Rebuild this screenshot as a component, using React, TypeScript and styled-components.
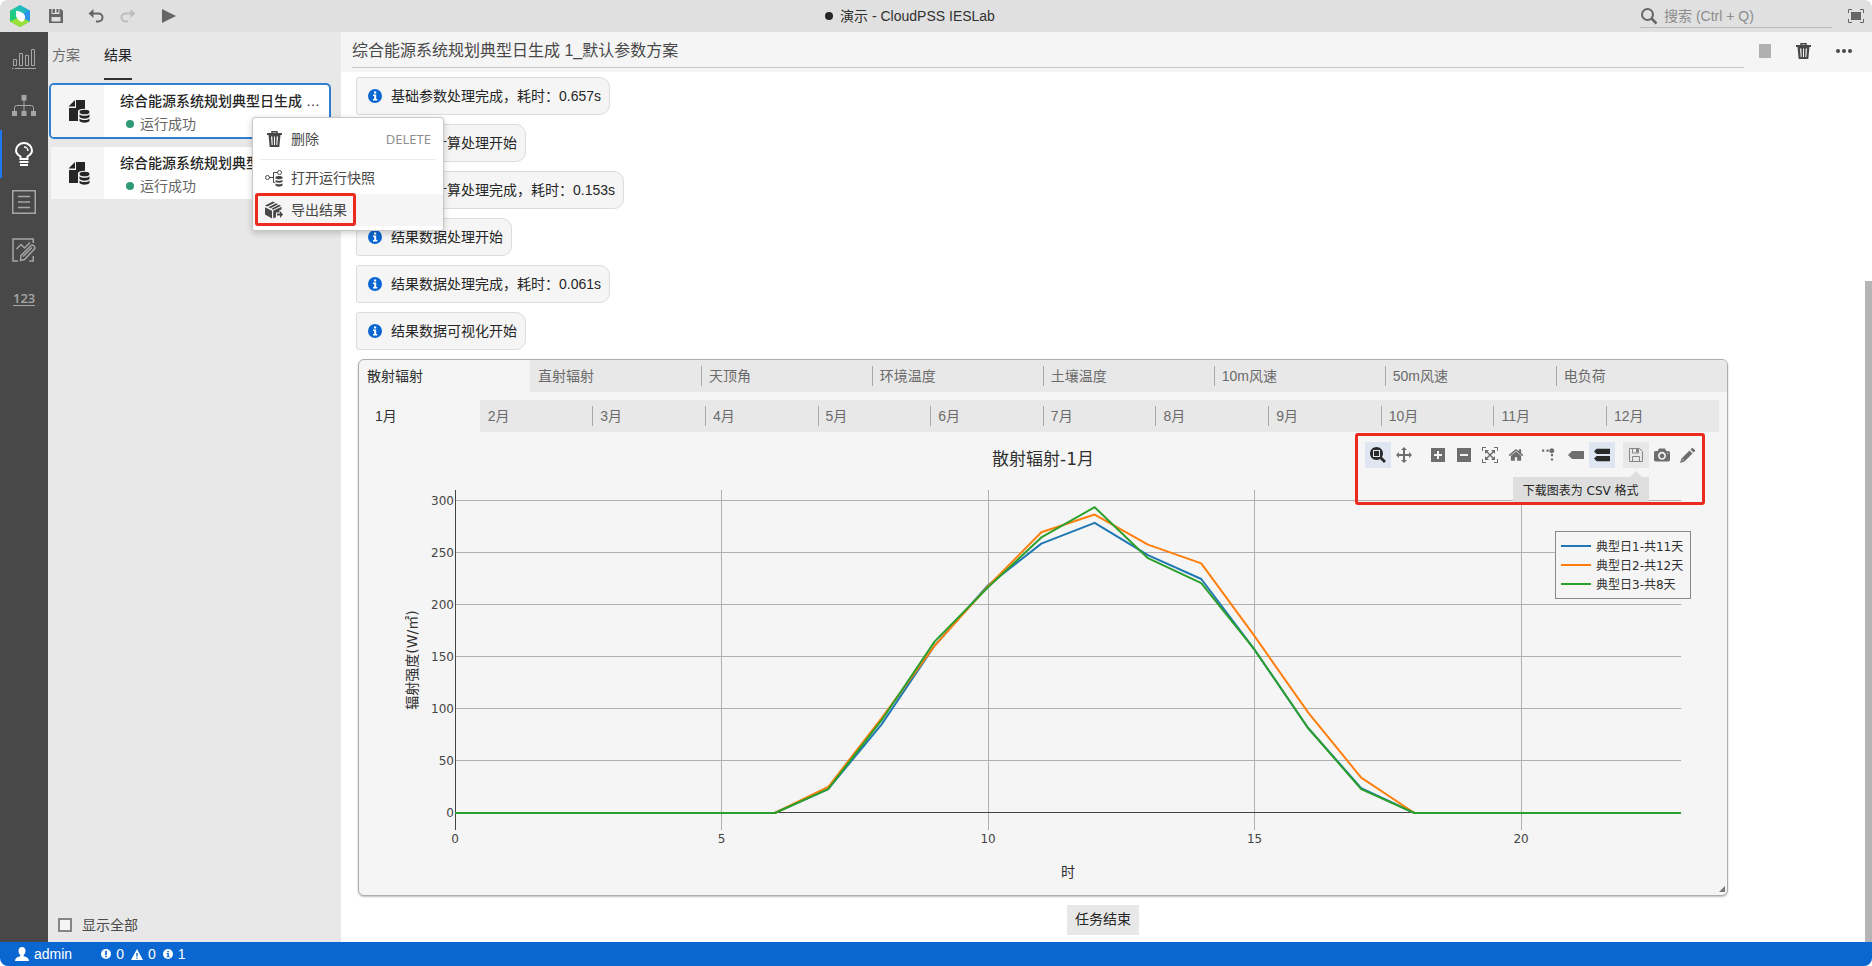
import React, { useEffect, useRef, useState } from "react";
import styled, { createGlobalStyle } from "styled-components";

const uiFont = `"Liberation Sans", "Noto Sans CJK SC", sans-serif`;
const plotFont = `"DejaVu Sans", "Noto Sans CJK SC", sans-serif`;

const GlobalStyle = createGlobalStyle`
  *, *::before, *::after { box-sizing: border-box; }
  body { margin: 0; background: #fff; font-family: ${uiFont}; font-size: 14px; line-height: 20px; color: #262626; }
  button, input { font: inherit; color: inherit; }
  button { border: 0; padding: 0; background: none; cursor: pointer; }
  svg { display: block; }
  h1, h2, p, ul, ol { margin: 0; padding: 0; font-size: inherit; font-weight: normal; list-style: none; }
`;

/* ---------- frame ---------- */

const Window = styled.div`
  position: relative;
  display: flex;
  flex-direction: column;
  min-height: 100vh;
  border-radius: 8px;
  overflow: hidden;
`;

const TitleBar = styled.header`
  display: flex;
  align-items: center;
  height: 32px;
  background: #e0e0e0;
  color: #666;
`;

const BarTools = styled.div`
  display: flex;
  align-items: center;
  width: 188px;
  padding-left: 9px;
`;

const BarButton = styled.button<{ $gap?: number }>`
  flex: none;
  display: flex;
  align-items: center;
  justify-content: center;
  width: 16px;
  height: 24px;
  margin-left: ${(p) => p.$gap ?? 16}px;
  &:disabled { color: #bdbdbd; }
`;

const WindowTitle = styled.h1`
  flex: 1;
  display: flex;
  align-items: center;
  justify-content: center;
  gap: 7px;
  color: #303030;
`;

const Dot = styled.span<{ $color: string }>`
  width: 8px;
  height: 8px;
  border-radius: 50%;
  background: ${(p) => p.$color};
`;

const SearchArea = styled.div`
  display: flex;
  align-items: center;
  width: 240px;
  padding: 0 8px;
`;

const SearchBox = styled.label`
  flex: 1;
  min-width: 0;
  display: flex;
  align-items: center;
  gap: 6px;
  height: 24px;
  border-bottom: 1px solid #bcbcbc;
`;

const SearchInput = styled.input`
  flex: 1;
  min-width: 0;
  padding: 0;
  border: 0;
  outline: 0;
  background: transparent;
  &::placeholder { color: #8c8c8c; opacity: 1; }
`;

const Workspace = styled.div`
  flex: 1;
  display: flex;
  background: #fff;
`;

const ActivityBar = styled.nav`
  flex: none;
  width: 48px;
  padding-top: 2px;
  background: #484848;
`;

const ActivityButton = styled.button<{ $active?: boolean }>`
  display: flex;
  align-items: center;
  justify-content: center;
  width: 48px;
  height: 48px;
  color: ${(p) => (p.$active ? "#fff" : "#a6a6a6")};
  box-shadow: ${(p) => (p.$active ? "inset 2px 0 #1f78f0" : "none")};
`;

/* ---------- result list ---------- */

const SidePanel = styled.aside`
  flex: none;
  display: flex;
  flex-direction: column;
  width: 293px;
  background: #e8e8e8;
`;

const SideTabs = styled.div`
  display: flex;
  gap: 24px;
  height: 48px;
  padding-left: 4px;
`;

const SideTab = styled.button<{ $active?: boolean }>`
  color: ${(p) => (p.$active ? "#222" : "#6b6b6b")};
  border-bottom: 2px solid ${(p) => (p.$active ? "#303030" : "transparent")};
`;

const ResultList = styled.ul`
  display: flex;
  flex-direction: column;
  gap: 6px;
  padding: 3px 10px 0 1px;
`;

const ResultCard = styled.li<{ $active?: boolean }>`
  display: flex;
  height: 56px;
  border: 2px solid ${(p) => (p.$active ? "#2e7fd0" : "transparent")};
  border-radius: 5px;
  background: #fff;
  background-clip: padding-box;
  overflow: hidden;
`;

const ResultIcon = styled.div`
  flex: none;
  display: flex;
  align-items: center;
  justify-content: center;
  width: 53px;
  padding-left: 2px;
  background: #f5f5f5;
  color: #262626;
`;

const ResultText = styled.div`
  flex: 1;
  min-width: 0;
  padding: 6px 8px 0 16px;
`;

const ResultName = styled.p`
  font-weight: 500;
  line-height: 20px;
  overflow: hidden;
  text-overflow: ellipsis;
  white-space: nowrap;
`;

const ResultState = styled.p`
  display: flex;
  align-items: center;
  gap: 6px;
  margin-top: 3px;
  padding-left: 6px;
  color: #666;
`;

const ShowAll = styled.label`
  display: flex;
  align-items: center;
  gap: 10px;
  height: 34px;
  margin-top: auto;
  padding-left: 10px;
  color: #4a4a4a;
`;

const CheckBox = styled.input`
  appearance: none;
  width: 14px;
  height: 14px;
  margin: 0;
  border: 2px solid #858585;
  background: #f5f5f5;
  &:checked { background: #0a66d0; }
`;

/* ---------- context menu ---------- */

const ContextMenu = styled.div`
  position: absolute;
  left: 252px;
  top: 117px;
  z-index: 2;
  width: 192px;
  padding: 5px 0 4px;
  border: 1px solid #c8c8c8;
  border-radius: 3px;
  background: #fff;
  box-shadow: 0 2px 6px rgba(0, 0, 0, 0.2);
`;

const MenuItem = styled.button<{ $hover?: boolean }>`
  display: flex;
  align-items: center;
  gap: 8px;
  width: 100%;
  height: 32px;
  padding: 0 12px;
  color: #484848;
  background: ${(p) => (p.$hover ? "#f5f5f5" : "transparent")};
`;

const MenuIcon = styled.span`
  display: flex;
  justify-content: center;
  width: 18px;
`;

const Shortcut = styled.kbd`
  margin-left: auto;
  font: 13px "Noto Sans", sans-serif;
  color: #8f8f8f;
`;

const MenuDivider = styled.hr`
  height: 1px;
  margin: 4px 7px 2px;
  border: 0;
  background: #ebebeb;
`;

const MenuItemWrap = styled.div`
  position: relative;
`;

const Highlight = styled.div<{ $inset: string }>`
  position: absolute;
  inset: ${(p) => p.$inset};
  border: 3px solid #ec2a20;
  border-radius: 3px;
  pointer-events: none;
`;

/* ---------- main ---------- */

const Main = styled.main`
  flex: 1;
  min-width: 0;
  display: flex;
  flex-direction: column;
`;

const MainHeader = styled.div`
  display: flex;
  height: 40px;
  padding: 0 20px 4px 11px;
  background: #f5f5f5;
  color: #484848;
`;

const DocTitle = styled.h2`
  flex: 1;
  font-size: 16px;
  line-height: 38px;
  border-bottom: 1px solid #c8c8c8;
  height: 36px;
`;

const HeaderTools = styled.div`
  display: flex;
  align-items: center;
  justify-content: space-between;
  width: 93px;
  height: 38px;
  margin-left: 15px;
`;

const HeaderButton = styled.button`
  display: flex;
  align-items: center;
  &:disabled { color: #b0b0b0; }
`;

const ScrollArea = styled.div`
  flex: 1;
  display: flex;
`;

const Output = styled.section`
  flex: 1;
  min-width: 0;
  display: flex;
  flex-direction: column;
  align-items: flex-start;
  gap: 9px;
  padding: 5px 0 7px;
`;

const ScrollTrack = styled.div`
  flex: none;
  display: flex;
  align-items: flex-end;
  width: 7px;
`;

const ScrollThumb = styled.div`
  width: 100%;
  height: 76%;
  background: #b5b5b5;
`;

const LogChip = styled.p`
  display: flex;
  align-items: center;
  gap: 9px;
  height: 38px;
  margin-left: 15px;
  padding: 0 8px 0 11px;
  border: 1px solid #dcdcdc;
  border-radius: 3px 10px 10px 3px;
  background: #f5f5f5;
`;

const ChartCard = styled.div`
  position: relative;
  width: calc(90% - 2px);
  margin-left: 17px;
  border: 1px solid #adadad;
  border-radius: 6px;
  background: #f5f5f5;
  box-shadow: 0 1px 2px rgba(0, 0, 0, 0.25);
  overflow: hidden;
`;

const TabStrip = styled.div<{ $inner?: boolean }>`
  display: flex;
  margin: ${(p) => (p.$inner ? "8px 8px 0" : "0")};
`;

const StripTab = styled.button<{ $active?: boolean; $line?: boolean }>`
  position: relative;
  flex: 1 1 0;
  height: 32px;
  padding-left: 8px;
  text-align: left;
  color: ${(p) => (p.$active ? "#303030" : "#6b6b6b")};
  background: ${(p) => (p.$active ? "transparent" : "#e8e8e8")};
  &::before {
    content: "";
    position: absolute;
    left: 0;
    top: 6px;
    height: 20px;
    border-left: 1px solid ${(p) => (p.$line ? "#a8a8a8" : "transparent")};
  }
`;

const Plot = styled.div`
  position: relative;
  height: 463px;
  margin: 0 8px;
`;

const Grip = styled.svg`
  position: absolute;
  right: 2px;
  bottom: 3px;
`;

const ModeBar = styled.div`
  position: absolute;
  top: 10px;
  right: 18px;
  display: flex;
  gap: 8px;
`;

const ModeGroup = styled.div`
  display: flex;
`;

const ModeButton = styled.button<{ $state?: "on" | "hover" }>`
  display: flex;
  align-items: center;
  justify-content: center;
  width: 26px;
  height: 26px;
  color: ${(p) => (p.$state === "on" ? "#2a2a2a" : "#6e6e6e")};
  background: ${(p) => (p.$state === "on" ? "#dfe6f1" : p.$state === "hover" ? "#e8e8e8" : "transparent")};
`;

const Tip = styled.div`
  position: absolute;
  top: 35px;
  right: 52px;
  padding: 0 10px;
  height: 26px;
  background: #dedede;
  font-family: ${plotFont};
  font-size: 12px;
  line-height: 28px;
  white-space: nowrap;
  &::before {
    content: "";
    position: absolute;
    right: 7px;
    top: -6px;
    border: 6px solid transparent;
    border-top: 0;
    border-bottom-color: #dedede;
  }
`;

const EndNote = styled.p`
  align-self: center;
  height: 30px;
  padding: 0 8px;
  line-height: 28px;
  background: #e8e8e8;
`;

const StatusBar = styled.footer`
  display: flex;
  align-items: center;
  height: 24px;
  padding-left: 15px;
  background: #0a66d0;
  color: #fff;
`;

const StatusItem = styled.button<{ $before?: number }>`
  display: flex;
  align-items: center;
  gap: 5px;
  margin-left: ${(p) => p.$before ?? 7}px;
`;

/* ---------- icons ---------- */

const Logo = () => (
  <svg width="22" height="22" viewBox="0 0 22 22">
    <defs>
      <linearGradient id="lg" x1="0" y1="1" x2="1" y2="0">
        <stop offset="0" stopColor="#1fd04a" />
        <stop offset="0.55" stopColor="#22c9a0" />
        <stop offset="1" stopColor="#1f9bf5" />
      </linearGradient>
    </defs>
    <path d="M11 0 21 5.5v11L11 22 1 16.500v-11z" fill="url(#lg)" />
    <path d="M1 16.500 11 12l10 4.500L11 22z" fill="#9be03a" />
    <path d="M21 5.500v11l-6-3V8z" fill="#2a94f0" />
    <path d="M7 6c4 0 8 2 9 5 .5 2-1 5-3 6-3-1-6-4-6-7z" fill="#fff" />
  </svg>
);

const Save = () => (
  <svg width="14" height="14" viewBox="0 0 14 14">
    <path fill="currentColor" fillRule="evenodd" d="M0 0h2.500v5h8V0H12l2 2v12H0zM2.500 8v4.500h9V8zM7.500 0H9.500v3.500H7.500zM3.500 0H6v4H3.500z" />
  </svg>
);

const Undo = ({ flip }: { flip?: boolean }) => (
  <svg width="16" height="14" viewBox="0 0 16 14" fill="none" stroke="currentColor" strokeWidth="2">
    <g transform={flip ? "matrix(-1 0 0 1 16 0)" : undefined}>
      <path d="M2 4.500h8.500a4 4 0 0 1 0 8H8" />
      <path d="M5.500 0 0.500 4.500l5 4.500z" fill="currentColor" stroke="none" />
    </g>
  </svg>
);

const Play = () => (
  <svg width="14" height="14" viewBox="0 0 14 14"><path d="M0 0l14 7-14 7z" fill="currentColor" /></svg>
);

const Search = () => (
  <svg width="18" height="18" viewBox="0 0 18 18" fill="none" stroke="#666">
    <circle cx="7.500" cy="7.500" r="5.500" strokeWidth="2" />
    <path d="M11.500 11.500 16.500 16.500" strokeWidth="2.500" />
  </svg>
);

const FullScreen = () => (
  <svg width="16" height="14" viewBox="0 0 16 14" fill="none" stroke="currentColor">
    <path d="M.5 4V.5H4M12 .5h3.500V4M15.500 10v3.500H12M4 13.500H.5V10" />
    <path d="M3 3h10v8H3z" fill="currentColor" stroke="none" />
  </svg>
);

const Trash = () => (
  <svg width="15" height="16" viewBox="0 0 15 16">
    <path fill="none" stroke="currentColor" strokeWidth="1.500" d="M5 2.500V.75h5V2.500" />
    <path fill="currentColor" d="M0 2h15v2H0z" />
    <path fill="currentColor" fillRule="evenodd" d="M1.500 4h12l-1.200 12H2.700zM4 5.500l.7 8.500h1L5.300 5.500zM7 5.500V14h1V5.500zM9.700 5.500 9.300 14h1l.7-8.500z" />
  </svg>
);

const Dots = () => (
  <svg width="16" height="4" viewBox="0 0 16 4" fill="currentColor">
    <circle cx="2" cy="2" r="2" /><circle cx="8" cy="2" r="2" /><circle cx="14" cy="2" r="2" />
  </svg>
);

const Square = () => (
  <svg width="12" height="14" viewBox="0 0 12 14"><path d="M0 0h12v14H0z" fill="currentColor" /></svg>
);

const Bars = () => (
  <svg width="24" height="22" viewBox="0 0 24 22" fill="none" stroke="currentColor">
    <path d="M1.500 12.500h3v6h-3zM7.500 6.500h3v12h-3zM13.500 8.500h3v10h-3zM19.500 2.500h3v16h-3zM0 21.500h1.500M3 21.500h21" />
  </svg>
);

const Tree = () => (
  <svg width="24" height="22" viewBox="0 0 24 22" fill="currentColor">
    <path d="M9.500 0h5v5.500h-5zM0 16h5v5H0zM9.500 16h5v5h-5zM19 16h5v5h-5z" />
    <path fill="none" stroke="currentColor" d="M12 5v11M2.500 16v-3.500q0-2 2-2h15q2 0 2 2V16" />
  </svg>
);

const Bulb = () => (
  <svg width="20" height="24" viewBox="0 0 20 24" fill="none" stroke="currentColor" strokeWidth="2">
    <path d="M6.500 17v-2.500C4 13 2 11.500 2 8.500a8 7.500 0 0 1 16 0c0 3-2 4.500-4.500 6V17zM5.500 20h9M6 23h8" />
    <path d="M10 5a4 4 0 0 1 4 4" strokeWidth="1.500" />
  </svg>
);

const ListIcon = () => (
  <svg width="24" height="24" viewBox="0 0 24 24" fill="none" stroke="currentColor" strokeWidth="1.500">
    <path d="M.75.75h22.500v22.500H.75z" />
    <path d="M6 6.500h12M6 12h12M6 17.500h12" />
  </svg>
);

const EditChart = () => (
  <svg width="24" height="24" viewBox="0 0 24 24" fill="none" stroke="currentColor" strokeWidth="1.500">
    <path d="M21.250 5V1H1v22h5M21.250 18v5h-4" />
    <path d="M4.500 11 9 6.500l3.500 3.500L18 4.500M8.500 22.500l.5-5L19 7.500q1.500-1 3 .5t.5 3L12.500 21.500zM11 18.500 20 9.500" />
  </svg>
);

const Digits = styled.span`
  width: 22px;
  font-family: "Open Sans", "Noto Sans", sans-serif;
  font-size: 13px;
  font-weight: 600;
  line-height: 14px;
  text-align: center;
  border-bottom: 1px solid currentColor;
`;

const DocDb = () => (
  <svg width="22" height="24" viewBox="0 0 22 24" fill="currentColor">
    <path d="M8 1h9v21H1V9h7z" />
    <path d="M0.500 7.500 7 1v6.500z" />
    <path d="M10 12c1-3 12-3 13 0v12H10z" fill="#f5f5f5" />
    <ellipse cx="16.500" cy="13" rx="5" ry="2.300" />
    <path d="M11.500 15.300c2 2 8 2 10 0V18c-2 2.200-8 2.200-10 0zM11.500 19.500c2 2 8 2 10 0V22c-2 2.300-8 2.300-10 0z" />
  </svg>
);

const Snapshot = () => (
  <svg width="18" height="17" viewBox="0 0 18 17" fill="none" stroke="currentColor">
    <circle cx="2.500" cy="7.500" r="2" /><circle cx="14.500" cy="2.500" r="2" />
    <path d="M4.500 7.500h4M12.500 2.500H8.500v10H10" />
    <path fill="currentColor" stroke="none" d="M10.500 7c1.500-1.200 5.500-1.200 7 0v1.500c-1.500 1-5.500 1-7 0zM10.500 10c1.500 1 5.500 1 7 0v2c-1.500 1-5.500 1-7 0zM10.500 13.500c1.500 1 5.500 1 7 0v2c-1.500 1.500-5.500 1.500-7 0z" />
  </svg>
);

const Package = () => (
  <svg width="18" height="18" viewBox="0 0 18 18" fill="currentColor">
    <path d="M0 4.500 8 .5l2 1-7.500 4zM3.500 6.200l7.500-4 2 1-7.500 4zM6.500 7.800 14 3.800l2 1-8 4zM0 6.200l7 3.500V17.500l-7-4z" />
    <path d="M8.200 9.800 16.500 5.800v3L14.500 8.800v2.700H11V16l-2.800 1.500z" />
    <path d="M12 12.500h3V10l3 3.500-3 3.500v-2.500h-3z" />
  </svg>
);

const Info = ({ size = 14, bg, fg }: { size?: number; bg: string; fg: string }) => (
  <svg width={size} height={size} viewBox="0 0 14 14">
    <circle cx="7" cy="7" r="7" fill={bg} />
    <path fill={fg} d="M6 2.500h2.200v2H6zM5 5.500h3.200V10H9.300v1.500H5V10h1.200V7H5z" />
  </svg>
);

const ErrorMark = () => (
  <svg width="10" height="10" viewBox="0 0 14 14">
    <circle cx="7" cy="7" r="7" fill="#fff" />
    <path fill="#0a66d0" d="M5.800 2.500h2.400v6H5.800zM5.800 9.500h2.400v2H5.800z" />
  </svg>
);

const WarnMark = () => (
  <svg width="12" height="11" viewBox="0 0 12 11">
    <path fill="#fff" d="M6 0l6 11H0z" />
    <path fill="#0a66d0" d="M5.300 4h1.400v3.500H5.300zM5.300 8.500h1.400v1.200H5.300z" />
  </svg>
);

const User = () => (
  <svg width="14" height="14" viewBox="0 0 14 14" fill="#fff">
    <path d="M7 0c2.200 0 3.500 1.500 3.500 4 0 1.800-.8 3.200-1.800 4v1.200c2 .8 5 1 5.300 4.800H0c.3-3.800 3.300-4 5.300-4.800V8c-1-.8-1.800-2.200-1.800-4 0-2.500 1.300-4 3.500-4z" />
  </svg>
);

/* Modebar glyphs use a 1000-unit em with the y axis pointing up. */
const Glyph = ({ w = 1000, d, t = "matrix(1 0 0 -1 0 850)" }: { w?: number; d: string; t?: string }) => (
  <svg width="16" height="16" viewBox={`0 0 ${w} 1000`} fill="currentColor"><path d={d} transform={t} /></svg>
);

const FloppyOutline = () => (
  <svg width="14" height="14" viewBox="0 0 14 14" fill="none" stroke="#858585">
    <path d="M.5.5h10l3 3v10H.5zM3.500 1v4h6V1M3.500 13V8.500h7V13" />
    <path d="M7.500 1h1.500v3H7.500z" fill="#858585" />
  </svg>
);

const Pencil = () => (
  <svg width="15" height="15" viewBox="0 0 15 15" fill="currentColor">
    <path d="M10.500 1.500 12 0h.8L15 2.200V3l-1.500 1.500zM9.500 2.500l3 3-8 8L0 15l1.500-4.500zM3 11l-.8 1.700 1.700-.7z" />
  </svg>
);

type Mode = { label: string; icon: React.ReactNode; state?: "on" | "hover" };

const modeGroups: Mode[][] = [
  [
    { label: "缩放", state: "on", icon: <Glyph d="m1000-25l-250 251c40 63 63 138 63 218 0 224-182 406-407 406-224 0-406-182-406-406s183-406 407-406c80 0 155 22 218 62l250-250 125 125z m-812 250l0 438 437 0 0-438-437 0z m62 375l313 0 0-312-313 0 0 312z" /> },
    { label: "平移", icon: <Glyph d="m1000 350l-187 188 0-125-250 0 0 250 125 0-188 187-187-187 125 0 0-250-250 0 0 125-188-188 186-187 0 125 252 0 0-250-125 0 187-188 188 188-125 0 0 250 250 0 0-126 187 188z" /> },
  ],
  [
    { label: "放大", icon: <Glyph w={875} d="m1 787l0-875 875 0 0 875-875 0z m687-500l-187 0 0-187-125 0 0 187-188 0 0 125 188 0 0 187 125 0 0-187 187 0 0-125z" /> },
    { label: "缩小", icon: <Glyph w={875} d="m0 788l0-876 875 0 0 876-875 0z m688-500l-500 0 0 125 500 0 0-125z" /> },
    { label: "自动缩放", icon: <Glyph d="m250 850l-187 0-63 0 0-62 0-188 63 0 0 188 187 0 0 62z m688 0l-188 0 0-62 188 0 0-188 62 0 0 188 0 62-62 0z m-875-938l0 188-63 0 0-188 0-62 63 0 187 0 0 62-187 0z m875 188l0-188-188 0 0-62 188 0 62 0 0 62 0 188-62 0z m-125 188l-1 0-93-94-156 156 156 156 92-93 2 0 0 250-250 0 0-2 93-92-156-156-156 156 94 92 0 2-250 0 0-250 0 0 93 93 157-156-157-156-93 94 0 0 0-250 250 0 0 0-94 93 156 157 156-157-93-93 0 0 250 0 0 250z" /> },
    { label: "重置坐标轴", icon: <Glyph w={929} d="M786 296v-267q0-15-11-26t-25-10h-214v214h-143v-214h-214q-15 0-25 10t-11 26v267q0 1 0 2t0 2l321 264 321-264q1-1 1-4z m124 39l-34-41q-5-5-12-6h-2q-7 0-12 3l-386 322-386-322q-7-4-13-4-7 2-12 7l-35 41q-4 5-3 13t6 12l401 334q18 15 42 15t43-15l136-114v109q0 8 5 13t13 5h107q8 0 13-5t5-13v-227l122-102q5-5 6-12t-4-13z" /> },
  ],
  [
    { label: "切换尖峰线", icon: <Glyph t="matrix(1.5 0 0 -1.5 0 850)" d="M512 409c0-57-46-104-103-104-57 0-104 47-104 104 0 57 47 103 104 103 57 0 103-46 103-103z m-327-39l92 0 0 92-92 0z m-185 0l92 0 0 92-92 0z m370-186l92 0 0 93-92 0z m0-184l92 0 0 92-92 0z" /> },
    { label: "显示最近数据", icon: <Glyph w={1500} d="m375 725l0 0-375-375 375-374 0-1 1125 0 0 750-1125 0z" /> },
    { label: "对比数据", state: "on", icon: <Glyph w={1125} d="m187 786l0 2-187-188 188-187 0 0 937 0 0 373-938 0z m0-499l0 1-187-188 188-188 0 0 937 0 0 376-938-1z" /> },
  ],
  [
    { label: "下载图表为 CSV 格式", state: "hover", icon: <FloppyOutline /> },
    { label: "下载图片", icon: <Glyph d="m500 450c-83 0-150-67-150-150 0-83 67-150 150-150 83 0 150 67 150 150 0 83-67 150-150 150z m400 150h-120c-16 0-34 13-39 29l-31 93c-6 15-23 28-40 28h-340c-16 0-34-13-39-28l-31-94c-6-15-23-28-40-28h-120c-55 0-100-45-100-100v-450c0-55 45-100 100-100h800c55 0 100 45 100 100v450c0 55-45 100-100 100z m-400-550c-138 0-250 112-250 250 0 138 112 250 250 250 138 0 250-112 250-250 0-138-112-250-250-250z m365 380c-19 0-35 16-35 35 0 19 16 35 35 35 19 0 35-16 35-35 0-19-16-35-35-35z" /> },
    { label: "编辑图表", icon: <Pencil /> },
  ],
];

/* ---------- data ---------- */

const quantities = ["散射辐射", "直射辐射", "天顶角", "环境温度", "土壤温度", "10m风速", "50m风速", "电负荷"];
const months = Array.from({ length: 12 }, (_, i) => `${i + 1}月`);
const docName = "综合能源系统规划典型日生成 1_默认参数方案";

const logs = [
  "基础参数处理完成，耗时：0.657s",
  "典型日计算处理开始",
  "典型日计算处理完成，耗时：0.153s",
  "结果数据处理开始",
  "结果数据处理完成，耗时：0.061s",
  "结果数据可视化开始",
];

const series = [
  { name: "典型日1-共11天", color: "#1f77b4", day: [23, 85, 161, 219, 259, 279, 248, 225, 157, 82, 24] },
  { name: "典型日2-共12天", color: "#ff7f0e", day: [25, 91, 161, 218, 270, 287, 258, 240, 170, 97, 34] },
  { name: "典型日3-共8天", color: "#2ca02c", day: [23, 89, 165, 217, 265, 294, 245, 221, 157, 82, 23] },
].map((s) => ({ ...s, values: [0, 0, 0, 0, 0, 0, 0, ...s.day, 0, 0, 0, 0, 0, 0] }));

/* ---------- chart ---------- */

const pad = { left: 88, right: 38, top: 58, zero: 380, bottom: 398 };

const Chart = () => {
  const box = useRef<HTMLDivElement>(null);
  const [width, setWidth] = useState(1353);

  useEffect(() => {
    const el = box.current;
    if (!el) return;
    const measure = () => setWidth(el.clientWidth);
    measure();
    const observer = new ResizeObserver(measure);
    observer.observe(el);
    return () => observer.disconnect();
  }, []);

  const right = width - pad.right;
  const x = (hour: number) => pad.left + (hour * (right - pad.left)) / 23;
  const y = (value: number) => pad.zero - (value * 52) / 50;
  const middle = (pad.left + right) / 2;
  const legendX = width - 164;

  return (
    <Plot ref={box}>
      <svg width={width} height="463" fontFamily={plotFont} fontSize="12" fill="#444" role="img" aria-label="散射辐射-1月">
        <text x={middle - 25} y="33" fontSize="17" textAnchor="middle" fill="#303030">散射辐射-1月</text>
        <g stroke="#b0b0b0" shapeRendering="crispEdges">
          {[5, 10, 15, 20].map((h) => <line key={h} x1={x(h)} x2={x(h)} y1={pad.top} y2={pad.bottom} />)}
          {[50, 100, 150, 200, 250, 300].map((v) => <line key={v} x1={pad.left} x2={right} y1={y(v)} y2={y(v)} />)}
        </g>
        <g stroke="#444" shapeRendering="crispEdges">
          <line x1={pad.left} x2={pad.left} y1={pad.top} y2={pad.bottom} />
          <line x1={pad.left} x2={right} y1={pad.zero} y2={pad.zero} />
        </g>
        {series.map((s) => (
          <polyline key={s.name} fill="none" stroke={s.color} strokeWidth="2" strokeLinejoin="round"
            points={s.values.map((v, h) => `${x(h)},${y(v) + 1}`).join(" ")} />
        ))}
        {[0, 50, 100, 150, 200, 250, 300].map((v) => (
          <text key={v} x={pad.left - 1} y={y(v) + 5} textAnchor="end">{v}</text>
        ))}
        {[0, 5, 10, 15, 20].map((h) => (
          <text key={h} x={x(h)} y={pad.bottom + 13} textAnchor="middle">{h}</text>
        ))}
        <text x={middle} y="445" fontSize="14" textAnchor="middle" fill="#303030">时</text>
        <text transform="translate(50 228) rotate(-90)" fontSize="14" textAnchor="middle" fill="#303030">辐射强度(W/㎡)</text>
        <g transform={`translate(${legendX} 99)`}>
          <rect x="0.5" y="0.5" width="135" height="67" fill="#f5f5f5" stroke="#888" />
          {series.map((s, i) => (
            <g key={s.name}>
              <line x1="6" x2="36" y1={15 + i * 19} y2={15 + i * 19} stroke={s.color} strokeWidth="2" />
              <text x="41" y={20 + i * 19} fill="#303030">{s.name}</text>
            </g>
          ))}
        </g>
      </svg>
      <ModeBar>
        {modeGroups.map((group, i) => (
          <ModeGroup key={i}>
            {group.map((m) => (
              <ModeButton key={m.label} $state={m.state} aria-label={m.label}>{m.icon}</ModeButton>
            ))}
          </ModeGroup>
        ))}
        <Tip role="tooltip">下载图表为 CSV 格式</Tip>
        <Highlight $inset="-9px -4px -37px -10px" />
      </ModeBar>
    </Plot>
  );
};

/* ---------- page ---------- */

const activities = [
  { label: "数据", icon: <Bars /> },
  { label: "拓扑", icon: <Tree /> },
  { label: "优化", icon: <Bulb />, active: true },
  { label: "列表", icon: <ListIcon /> },
  { label: "编辑", icon: <EditChart /> },
  { label: "数值", icon: <Digits>123</Digits> },
];

export default function App() {
  return (
    <Window>
      <GlobalStyle />
      <TitleBar>
        <BarTools>
          <Logo />
          <BarButton $gap={17} aria-label="保存"><Save /></BarButton>
          <BarButton $gap={24} aria-label="撤销"><Undo /></BarButton>
          <BarButton disabled aria-label="重做"><Undo flip /></BarButton>
          <BarButton $gap={25} aria-label="运行"><Play /></BarButton>
        </BarTools>
        <WindowTitle><Dot $color="#262626" />演示 - CloudPSS IESLab</WindowTitle>
        <SearchArea>
          <SearchBox>
            <Search />
            <SearchInput type="search" aria-label="搜索" placeholder="搜索 (Ctrl + Q)" />
          </SearchBox>
          <BarButton aria-label="全屏"><FullScreen /></BarButton>
        </SearchArea>
      </TitleBar>

      <Workspace>
        <ActivityBar>
          {activities.map((a) => (
            <ActivityButton key={a.label} $active={a.active} aria-label={a.label}>{a.icon}</ActivityButton>
          ))}
        </ActivityBar>

        <SidePanel>
          <SideTabs>
            <SideTab>方案</SideTab>
            <SideTab $active>结果</SideTab>
          </SideTabs>
          <ResultList>
            {[true, false].map((active) => (
              <ResultCard key={String(active)} $active={active}>
                <ResultIcon><DocDb /></ResultIcon>
                <ResultText>
                  <ResultName>{docName}</ResultName>
                  <ResultState><Dot $color="#2e9b76" />运行成功</ResultState>
                </ResultText>
              </ResultCard>
            ))}
          </ResultList>
          <ShowAll><CheckBox type="checkbox" />显示全部</ShowAll>
        </SidePanel>

        <Main>
          <MainHeader>
            <DocTitle>{docName}</DocTitle>
            <HeaderTools>
              <HeaderButton disabled aria-label="停止"><Square /></HeaderButton>
              <HeaderButton aria-label="删除"><Trash /></HeaderButton>
              <HeaderButton aria-label="更多"><Dots /></HeaderButton>
            </HeaderTools>
          </MainHeader>
          <ScrollArea>
            <Output>
              {logs.map((line) => (
                <LogChip key={line}><Info bg="#0a66d0" fg="#fff" />{line}</LogChip>
              ))}
              <ChartCard>
                <TabStrip>
                  {quantities.map((q, i) => (
                    <StripTab key={q} $active={i === 0} $line={i > 1}>{q}</StripTab>
                  ))}
                </TabStrip>
                <TabStrip $inner>
                  {months.map((m, i) => (
                    <StripTab key={m} $active={i === 0} $line={i > 1}>{m}</StripTab>
                  ))}
                </TabStrip>
                <Chart />
                <Grip width="6" height="6" viewBox="0 0 6 6"><path d="M6 0v6H0z" fill="#777" /></Grip>
              </ChartCard>
              <EndNote>任务结束</EndNote>
            </Output>
            <ScrollTrack><ScrollThumb /></ScrollTrack>
          </ScrollArea>
        </Main>
      </Workspace>

      <StatusBar>
        <StatusItem $before={0}><User />admin</StatusItem>
        <StatusItem $before={29}><ErrorMark />0</StatusItem>
        <StatusItem><WarnMark />0</StatusItem>
        <StatusItem><Info size={10} bg="#fff" fg="#0a66d0" />1</StatusItem>
      </StatusBar>

      <ContextMenu role="menu">
        <MenuItem role="menuitem"><MenuIcon><Trash /></MenuIcon>删除<Shortcut>DELETE</Shortcut></MenuItem>
        <MenuDivider />
        <MenuItem role="menuitem"><MenuIcon><Snapshot /></MenuIcon>打开运行快照</MenuItem>
        <MenuItemWrap>
          <MenuItem role="menuitem" $hover><MenuIcon><Package /></MenuIcon>导出结果</MenuItem>
          <Highlight $inset="-1px 87px 0 2px" />
        </MenuItemWrap>
      </ContextMenu>
    </Window>
  );
}
